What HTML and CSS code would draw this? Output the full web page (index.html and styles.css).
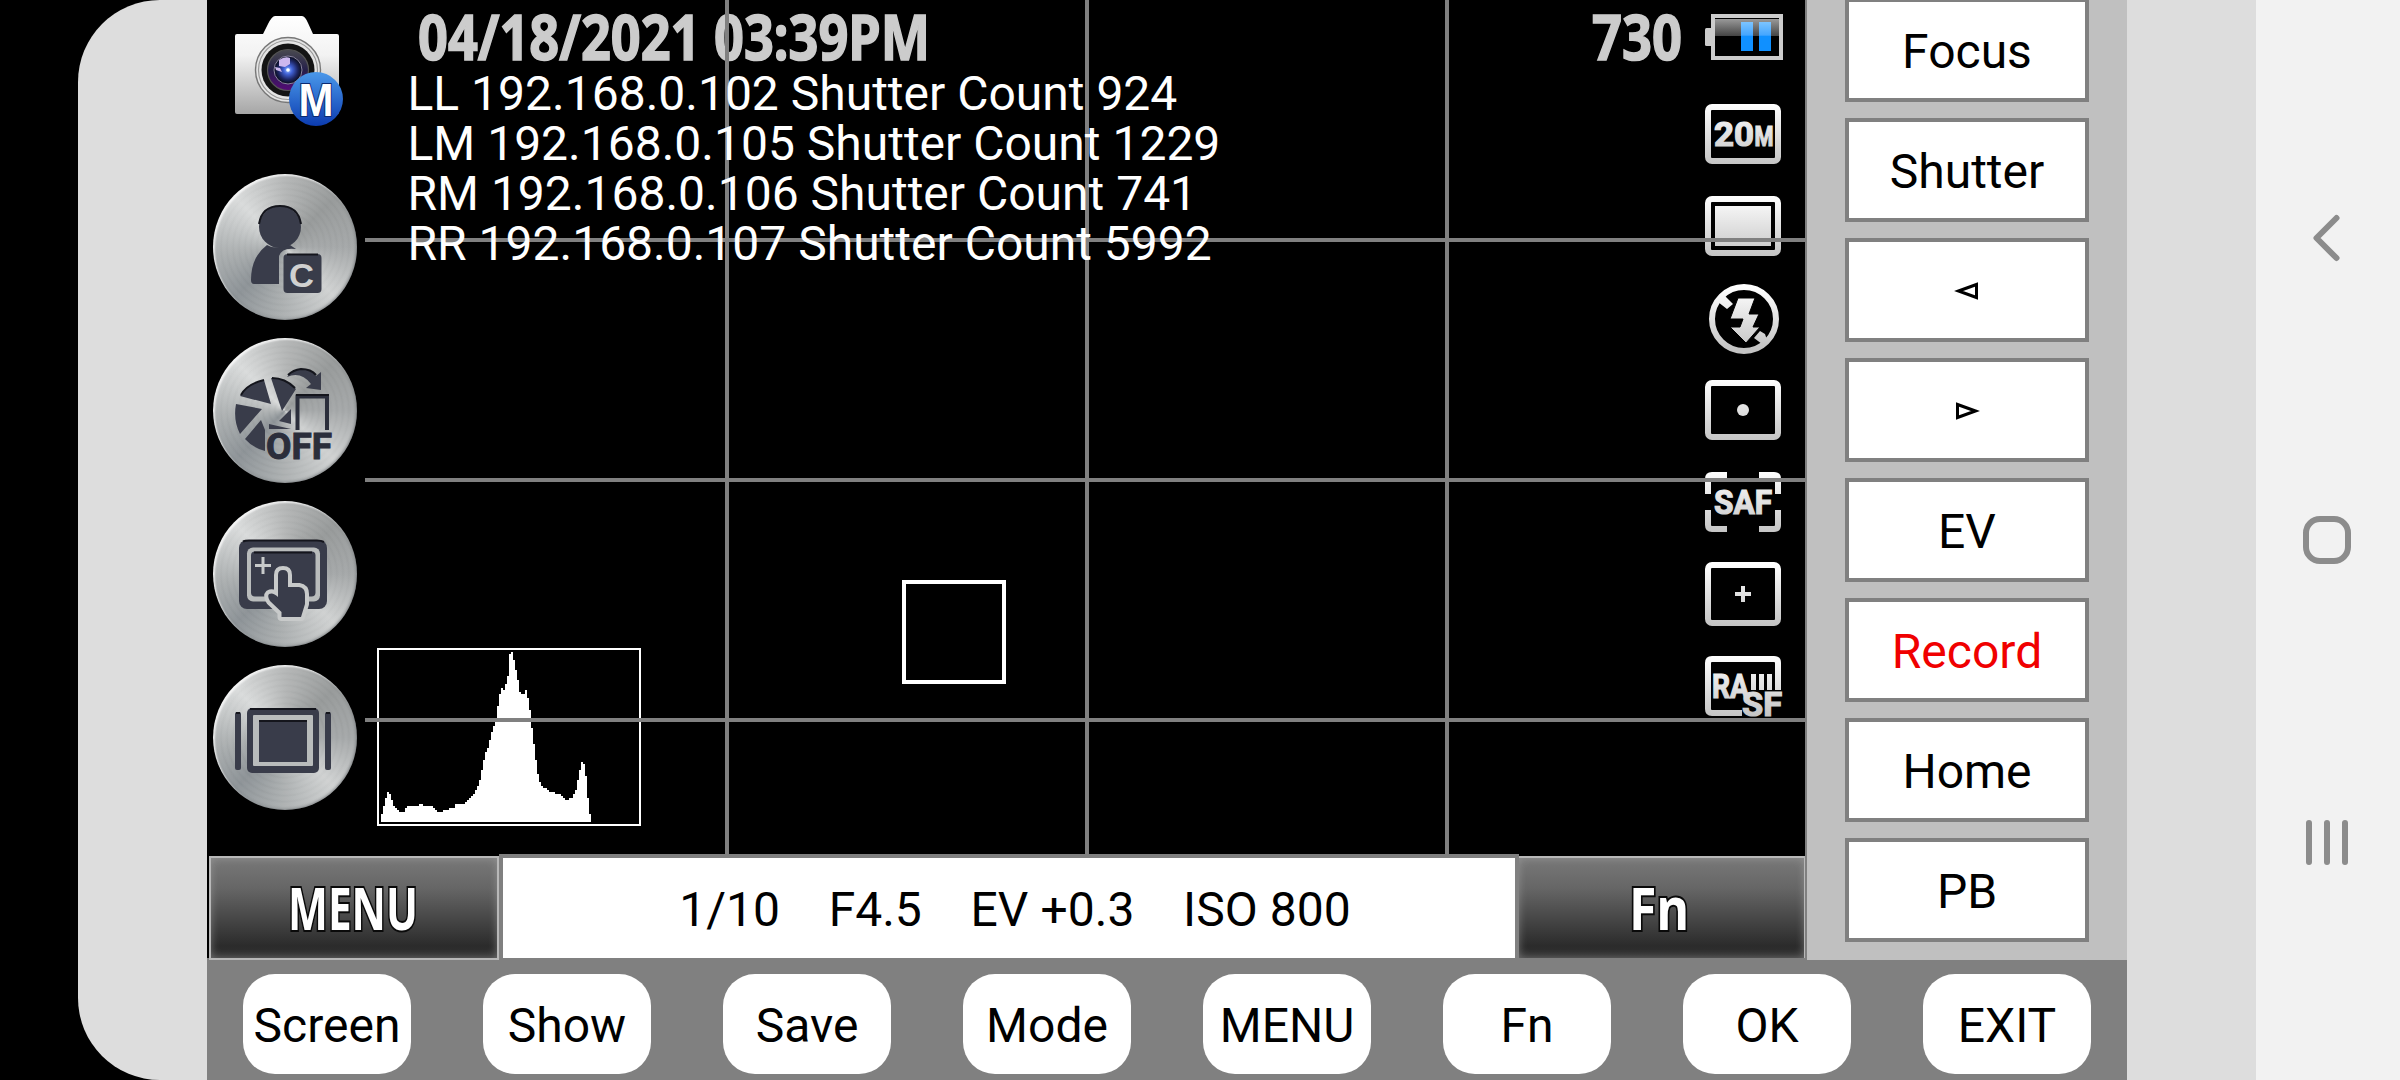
FILE: index.html
```html
<!DOCTYPE html>
<html lang="en">
<head>
<meta charset="utf-8">
<title>Camera Remote</title>
<link rel="stylesheet" href="styles.css">
</head>
<body>
<div class="device">
  <div class="bezel bezel-left"></div>
  <main class="app">
    <div class="upper">
      <section class="camera">
        <div class="viewfinder">
          <aside class="rail">
            <svg class="mode-icon" viewBox="0 0 108 110" aria-label="Manual mode">
              <defs>
                <linearGradient id="body" x1="0" y1="0" x2="0" y2="1"><stop offset="0" stop-color="#fff"/><stop offset=".4" stop-color="#f2f2f2"/><stop offset="1" stop-color="#a6a6a6"/></linearGradient>
                <linearGradient id="badge" x1="0" y1="0" x2="0" y2="1"><stop offset="0" stop-color="#4a98ea"/><stop offset="1" stop-color="#0c3cb0"/></linearGradient>
                <linearGradient id="glass" x1="0" y1="0" x2="0" y2="1"><stop offset="0" stop-color="#4a4a50"/><stop offset=".5" stop-color="#25204a"/><stop offset="1" stop-color="#560a78"/></linearGradient>
                <radialGradient id="iris"><stop offset="0" stop-color="#9fc4ff"/><stop offset=".3" stop-color="#4263d8"/><stop offset=".7" stop-color="#1c2460"/><stop offset="1" stop-color="#0a0c18"/></radialGradient>
              </defs>
              <path d="M28 18 33 8Q37 0 40 0H67Q70 0 73 7L78 18H102Q104 18 104 20V96Q104 98 102 98H2Q0 98 0 96V20Q0 18 2 18Z" fill="url(#body)"/>
              <circle cx="53" cy="54" r="32.5" fill="#e4e4e4" stroke="#777" stroke-width="1.4"/>
              <circle cx="53" cy="54" r="29.5" fill="none" stroke="#999" stroke-width="1.2"/>
              <circle cx="53" cy="54" r="26.5" fill="#141414"/>
              <circle cx="53" cy="54" r="20.5" fill="url(#glass)" stroke="#555" stroke-width="1.2"/>
              <circle cx="53" cy="54" r="14" fill="url(#iris)" stroke="#8a84a0" stroke-width="1"/>
              <path d="M44 44Q50 40 55 42V48L50 51 44 50ZM40 51 45 52 47 56 41 54Z" fill="#cdb8ee"/>
              <circle cx="53" cy="54" r="1.8" fill="#fff"/>
              <circle cx="81" cy="83" r="27" fill="url(#badge)"/>
              <text class="badge-letter" x="63.500" y="99.500" textLength="35" lengthAdjust="spacingAndGlyphs">M</text>
            </svg>
            <div class="knobs">
              <div class="knob">
                <svg viewBox="0 0 144 146" aria-label="Custom user">
                  <g class="ink"><circle cx="67" cy="53" r="21"/><path d="M54 71Q62 76 77 71L83 75Q69 73 66 82V110H41Q38 110 38 106 38 83 54 71Z"/><rect x="70.500" y="80" width="38" height="39" rx="4"/></g>
                  <path class="shade" d="M46 50Q49 32 67 32T88 50M74 80.500H105"/>
                  <text class="c-letter" x="76" y="112.500" textLength="25" lengthAdjust="spacingAndGlyphs">C</text>
                </svg>
              </div>
              <div class="knob">
                <svg viewBox="0 0 144 146" aria-label="Auto rotate off">
                  <g class="ink"><path d="M27 58Q34 46 51 42L58 66ZM58 40Q72 40 83 51L69 73ZM23 66 49 71 27 96Q20 82 23 66ZM48 82 52 92V113Q40 110 32 101ZM78 71 66 83 78 86ZM56 86 78 91H56Z"/><path d="M74 39Q80 31 88 31 98 31 103 38L108 34V52L93 50 98 46Q88 33 74 39Z"/></g>
                  <path class="outline" d="M84.500 92V58.500H114V92"/>
                  <path class="shade" d="M28 57Q34 46 51 42M59 40Q72 40 82 50M75 37Q80 32 88 31 98 31 103 37M83 57H116"/>
                  <g class="off-text"><text x="53" y="121" textLength="66" lengthAdjust="spacingAndGlyphs">OFF</text></g>
                </svg>
              </div>
              <div class="knob">
                <svg viewBox="0 0 144 146" aria-label="Touch focus">
                  <rect class="ink" x="26" y="39" width="88" height="69" rx="8"/>
                  <path class="shade" d="M30 40.500Q32 39.500 36 39.500H104Q108 39.500 111 41"/>
                  <rect class="lit" x="34" y="46.500" width="73" height="54" rx="6"/>
                  <rect class="ink" x="38" y="50.500" width="64.500" height="45" rx="4"/>
                  <path class="shade" d="M41 51.500H99"/>
                  <path class="plus" d="M50 56V73M42 64.500H58"/>
                  <path class="hand" d="M65 96V74Q65 69 70 69T75 74V86H86Q92 87 92 93V103L88 116H68.500V111L57 100Q54 95 56 93 60 91 65 96Z"/>
                  <path class="ink" d="M65 96V74Q65 69 70 69T75 74V86H86Q92 87 92 93V103L88 116H68.500V111L57 100Q54 95 56 93 60 91 65 96Z"/>
                </svg>
              </div>
              <div class="knob">
                <svg viewBox="0 0 144 146" aria-label="Frame display">
                  <g class="ink"><rect x="22" y="47" width="6" height="58" rx="2"/><rect x="112" y="47" width="6" height="58" rx="2"/><rect x="34" y="43" width="72" height="65" rx="5"/></g>
                  <path class="shade" d="M37 44H103M23 48H27M113 48H117"/>
                  <rect class="lit" x="40" y="50" width="60" height="51" rx="1"/>
                  <rect class="ink" x="46" y="55" width="48" height="42"/>
                  <path class="shade" d="M46 56H94"/>
                </svg>
              </div>
            </div>
          </aside>

          <div class="stage">
            <header class="status">
              <svg class="date" viewBox="0 0 520 70"><text x="6" y="60" textLength="512" lengthAdjust="spacingAndGlyphs">04/18/2021 03:39PM</text></svg>
              <svg class="shots" viewBox="0 0 100 70"><text x="3" y="60" textLength="90" lengthAdjust="spacingAndGlyphs">730</text></svg>
            </header>
            <div class="cameras">
              <p>LL 192.168.0.102 Shutter Count 924</p>
              <p>LM 192.168.0.105 Shutter Count 1229</p>
              <p>RM 192.168.0.106 Shutter Count 741</p>
              <p>RR 192.168.0.107 Shutter Count 5992</p>
            </div>
            <div class="histogram">
              <svg viewBox="0 0 132 89" shape-rendering="crispEdges"><path fill="#fff" d="M2 87V83H3V79H4V75H5V72H6V73H7V76H8V79H9V80H10V81H11V82H14V80H15V79H21V78H23V79H28V80H29V81H30V82H33V81H36V80H39V78H44V77H45V76H46V75H47V74H48V73H49V71H50V69H51V66H52V61H53V56H54V52H55V50H56V46H57V42H58V39H59V37H60V29H61V23H62V20H63V21H64V18H65V14H66V3H67V2H68V6H69V11H70V16H71V22H72V23H74V21H75V25H76V31H77V40H78V48H79V56H80V63H81V67H82V69H83V70H85V71H86V72H89V73H92V74H93V75H94V76H96V75H98V73H99V71H100V66H101V61H102V57H103V58H104V64H105V75H106V83H107V87Z"/></svg>
            </div>
            <div class="focus-box"></div>
          </div>

          <aside class="indicators">
            <svg class="battery" viewBox="0 0 78 46" aria-label="Battery">
              <defs>
                <linearGradient id="shine" x1="0" y1="0" x2="0" y2="1"><stop offset="0" stop-color="#999"/><stop offset="1" stop-color="#444"/></linearGradient>
                <linearGradient id="cell" x1="0" y1="0" x2="0" y2="1"><stop offset="0" stop-color="#7cc4ff"/><stop offset=".45" stop-color="#45a6ff"/><stop offset=".5" stop-color="#1090ff"/><stop offset="1" stop-color="#1090ff"/></linearGradient>
                <linearGradient id="ind" gradientUnits="userSpaceOnUse" x1="0" y1="0" x2="0" y2="62"><stop offset="0" stop-color="#fff"/><stop offset="1" stop-color="#c4c4c4"/></linearGradient>
              </defs>
              <rect x="0" y="14" width="8" height="18" rx="1.500" fill="#ccc"/>
              <rect x="8" y="2" width="68" height="42" fill="#000" stroke="#ccc" stroke-width="4"/>
              <rect x="10" y="5" width="64" height="17" fill="url(#shine)"/>
              <rect x="36" y="8" width="12" height="29" fill="url(#cell)"/><rect x="54" y="8" width="12" height="29" fill="url(#cell)"/>
            </svg>
            <svg class="ind" viewBox="0 0 76 62" aria-label="Image size"><rect class="frame" x="3" y="4" width="70" height="54" rx="4"/>
              <g class="tag"><text x="9" y="42.500" textLength="40" lengthAdjust="spacingAndGlyphs">20</text><text class="small" x="49.500" y="42.500" textLength="19" lengthAdjust="spacingAndGlyphs">M</text></g></svg>
            <svg class="ind" viewBox="0 0 76 62" aria-label="Drive mode"><rect class="frame" x="3" y="4" width="70" height="54" rx="4"/><rect x="10" y="11" width="56" height="40" fill="url(#ind)"/></svg>
            <svg class="ind" viewBox="0 0 76 62" aria-label="Flash off"><circle class="frame" cx="39" cy="32" r="32"/><path d="M13 15 20 9 28 17 22 22ZM49 51 55 44 60 47 62 53 57 57Z" fill="url(#ind)"/><path d="M33 11H50L44 27H54L48 40H55L41 56 25 40H35L38 32H25Z" fill="url(#ind)" stroke="#000" stroke-width="1"/></svg>
            <svg class="ind" viewBox="0 0 76 62" aria-label="Spot metering"><rect class="frame" x="3" y="4" width="70" height="54" rx="4"/><circle cx="38" cy="31" r="6" fill="url(#ind)"/></svg>
            <svg class="ind" viewBox="0 0 76 62" aria-label="Single autofocus"><path class="frame" d="M22 4H7Q3 4 3 8V23M54 4H69Q73 4 73 8V23M3 39V54Q3 58 7 58H22M73 39V54Q73 58 69 58H54"/><g class="tag"><text x="9" y="42.500" textLength="58" lengthAdjust="spacingAndGlyphs">SAF</text></g></svg>
            <svg class="ind" viewBox="0 0 76 62" aria-label="Center focus area"><rect class="frame" x="3" y="2" width="70" height="58" rx="4"/><path d="M36 23h4v6h6v4h-6v6h-4v-6h-6v-4h6z" fill="url(#ind)"/></svg>
            <svg class="ind" viewBox="0 0 76 62" aria-label="RAW and super fine"><path class="frame" d="M37 58H7Q3 58 3 54V8Q3 4 7 4H69Q73 4 73 8V34"/><g class="tag"><text x="7" y="43" textLength="37" lengthAdjust="spacingAndGlyphs">RA</text><text x="37" y="60.500" textLength="40" lengthAdjust="spacingAndGlyphs">SF</text></g><path d="M46 19h5v16h-5zM54 19h5v16h-5zM62 19h5v16h-5zM70 19h6v16h-6z" fill="url(#ind)"/></svg>
          </aside>

          <div class="grid-lines">
            <i class="v v1"></i><i class="v v2"></i><i class="v v3"></i>
            <i class="h h1"></i><i class="h h2"></i><i class="h h3"></i>
          </div>
        </div>
        <div class="info-bar">
          <div class="soft-key"><svg class="key-menu" viewBox="0 0 140 60"><text x="6" y="50" textLength="130" lengthAdjust="spacingAndGlyphs">MENU</text></svg></div>
          <div class="exposure">1/10    F4.5    EV +0.3    ISO 800</div>
          <div class="soft-key key-right"><svg class="key-fn" viewBox="0 0 70 60"><text x="4" y="50" textLength="60" lengthAdjust="spacingAndGlyphs">Fn</text></svg></div>
        </div>
      </section>
      <nav class="controls">
        <button class="control">Focus</button>
        <button class="control">Shutter</button>
        <button class="control" aria-label="Left"><svg class="tri" viewBox="0 0 24 20"><path d="M3.500 10 21.500 3.500V16.500Z"/></svg></button>
        <button class="control" aria-label="Right"><svg class="tri" viewBox="0 0 24 20"><path d="M20.500 10 2.500 3.500V16.500Z"/></svg></button>
        <button class="control">EV</button>
        <button class="control record">Record</button>
        <button class="control">Home</button>
        <button class="control">PB</button>
      </nav>
    </div>
    <footer class="actions">
      <button class="action">Screen</button>
      <button class="action">Show</button>
      <button class="action">Save</button>
      <button class="action">Mode</button>
      <button class="action">MENU</button>
      <button class="action">Fn</button>
      <button class="action">OK</button>
      <button class="action">EXIT</button>
    </footer>
  </main>
  <div class="bezel bezel-right"></div>
  <nav class="system">
    <svg viewBox="0 0 48 48" aria-label="Back"><path d="M33.500 4 13.500 24 33.500 44"/></svg>
    <svg viewBox="0 0 48 48" aria-label="Home"><rect x="3" y="3" width="42" height="42" rx="14"/></svg>
    <svg viewBox="0 0 48 48" aria-label="Recents"><path d="M6 5V44M24 5V44M42 5V44"/></svg>
  </nav>
</div>
</body>
</html>
```
FILE: styles.css
```css
* { box-sizing: border-box; }
body { margin: 0; background: #000; font-family: Roboto, sans-serif; font-size: 48px; color: #000; }
p { margin: 0; }
button { margin: 0; padding: 3px 0 0; border: 0; background: #fff; font: inherit; color: inherit; text-align: center; white-space: nowrap; }
svg { display: block; overflow: visible; }

.device { display: flex; width: 2400px; height: 1080px; padding-left: 78px; overflow: hidden; }
.bezel { width: 129px; background: #ddd; }
.bezel-left { border-radius: 82px 0 0 82px; }
.app { display: flex; flex-direction: column; width: 1920px; background: #808080; }
.upper { display: flex; height: 960px; }

.camera { width: 1600px; border-right: 2px solid #808080; background: #000; }
.viewfinder { position: relative; display: flex; height: 854px; }
.rail { width: 158px; padding-top: 16px; }
.mode-icon { width: 108px; height: 110px; margin-left: 28px; }
.badge-letter { font: bold 46px "Liberation Sans", sans-serif; fill: #fff; stroke: #0b2a70; stroke-width: 2px; paint-order: stroke; }
.knobs { display: flex; flex-direction: column; gap: 18px; padding: 48px 0 0 6px; }
.knob {
  width: 144px; height: 145.500px; border-radius: 50%;
  box-shadow: inset 2px 2px 2px rgba(255,255,255,.75), inset -1px -1px 2px rgba(80,85,88,.45);
  background:
    repeating-radial-gradient(circle at 50% 50%, rgba(255,255,255,.03) 0 2px, rgba(0,0,0,.012) 4px, rgba(255,255,255,.03) 6px),
    conic-gradient(from 0deg, #b4b6b6, #969999 45deg, #a4a7a8 90deg, #cfd1d1 135deg, #a9adae 185deg, #8c9296 225deg, #a9adae 262deg, #d9dbdb 315deg, #b4b6b6 360deg);
}
.ink { fill: #393c4a; }
.lit { fill: #b9bcbc; }
.shade { fill: none; stroke: #14151c; stroke-width: 2px; }
.outline { fill: none; stroke: #2b2e3b; stroke-width: 4px; }
.plus { stroke: #c8caca; stroke-width: 3px; }
.hand { fill: none; stroke: #c8caca; stroke-width: 8px; stroke-linejoin: round; }
.c-letter { font: bold 34px "Liberation Sans", sans-serif; fill: #d0d0d0; }
.off-text { font: bold 37.500px Roboto, sans-serif; fill: #2b2e3b; stroke: #2b2e3b; stroke-width: 1px; }

.stage { width: 1340px; }
.status { display: flex; justify-content: space-between; height: 70px; padding: 0 20px 0 47px; font: bold 62px "Noto Sans", sans-serif; fill: #ccc; stroke: #ccc; stroke-width: 1.600px; }
.date { width: 520px; height: 70px; }
.shots { width: 100px; height: 70px; margin-right: -4px; }
.cameras { position: relative; z-index: 2; margin-top: -1px; padding-left: 42.500px; color: #fff; line-height: 50px; white-space: nowrap; }
.histogram { position: absolute; left: 170px; top: 648px; width: 264px; height: 178px; box-shadow: inset 0 0 0 2px #fff; }
.focus-box { position: absolute; left: 695px; top: 580px; width: 104px; height: 104px; border: 4px solid #fff; z-index: 2; }

.indicators { display: flex; flex-direction: column; gap: 30px; width: 100px; padding-top: 14px; }
.battery { width: 78px; height: 46px; margin-bottom: 13px; }
.ind { width: 76px; height: 62px; }
.frame { fill: none; stroke: url(#ind); stroke-width: 6px; }
.tag { font: bold 33px Roboto, sans-serif; fill: url(#ind); stroke: url(#ind); stroke-width: 1.200px; }
.small { font-size: 27px; }

.grid-lines i { position: absolute; background: #808080; z-index: 1; }
.v { top: 0; width: 4px; height: 854px; }
.v1 { left: 518px; }
.v2 { left: 878px; }
.v3 { left: 1238px; }
.h { left: 158px; width: 1440px; height: 4px; }
.h1 { top: 238px; }
.h2 { top: 478px; }
.h3 { top: 718px; }

.info-bar { display: flex; align-items: flex-start; height: 106px; padding-left: 2px; background: linear-gradient(#0000 104px, #808080 104px); }
.soft-key {
  display: flex; align-items: center; justify-content: center; width: 290px; height: 104px; margin-top: 2px;
  border: 2px solid #b8b8b8; background: linear-gradient(#787878, #666 30%, #2b2b2b 88%, #333);
  box-shadow: inset 0 0 8px rgba(170,170,170,.55); fill: #fff;
}
.key-right { width: 286px; height: 102px; border-width: 2px 1px 0 0; }
.key-menu { width: 140px; height: 60px; margin: 4px 4px 0 0; }
.key-fn { width: 70px; height: 60px; margin: 4px 4px 0 0; }
.soft-key text { font: bold 60px "Noto Sans", sans-serif; stroke: #0a0a0a; stroke-width: 4px; paint-order: stroke; }
.exposure { width: 1020px; height: 104px; padding: 6px 0 0 12px; border: 4px solid #808080; border-bottom: 0; background: #fff; text-align: center; line-height: 92px; white-space: pre; word-spacing: .27px; }

.controls { display: flex; flex-direction: column; gap: 16px; width: 320px; margin-top: -2px; padding: 0 38px; background: #c0c0c0; }
.control { display: flex; align-items: center; justify-content: center; flex: 0 0 104px; border: 4px solid #808080; }
.record { color: #f00000; }
.tri { width: 24px; height: 20px; margin-bottom: 2px; fill: none; stroke: #000; stroke-width: 3px; }

.actions { display: flex; gap: 72px; padding: 14px 36px 6px; background: #808080; }
.action { width: 168px; height: 100px; border-radius: 32px; }

.system { display: flex; flex-direction: column; align-items: center; gap: 254px; width: 144px; padding: 214px 2px 0 0; background: #f2f2f2; }
.system svg { width: 48px; height: 48px; fill: none; stroke: #8c8c8c; stroke-width: 6px; stroke-linecap: round; stroke-linejoin: round; }
```
